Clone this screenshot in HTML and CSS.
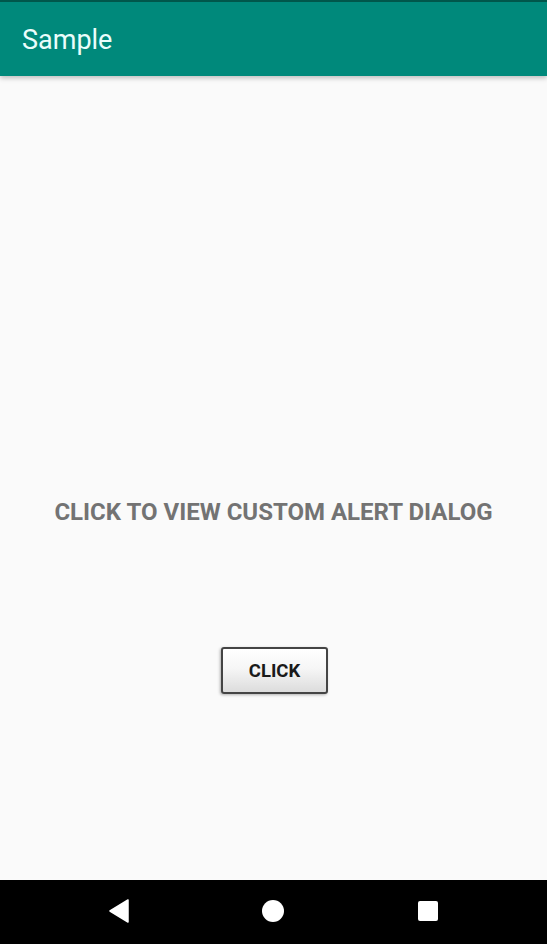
FILE: index.html
```html
<!DOCTYPE html>
<html>
<head>
<meta charset="utf-8">
<link rel="stylesheet" href="styles.css">
</head>
<body>
<div class="screen">
  <header class="appbar">
    <div class="status"></div>
    <div class="toolbar"><span class="title">Sample</span></div>
  </header>
  <main class="content">
    <div class="label">CLICK TO VIEW CUSTOM ALERT DIALOG</div>
    <button class="btn">CLICK</button>
  </main>
  <nav class="navbar">
    <svg class="nav-icon" width="20" height="24" viewBox="0 0 20 24"><path d="M19 1 L19 23 L1 12 Z" fill="#fff" stroke="#fff" stroke-width="1.5" stroke-linejoin="round"/></svg>
    <svg class="nav-icon" width="24" height="24" viewBox="0 0 24 24"><circle cx="12" cy="12" r="11" fill="#fff"/></svg>
    <svg class="nav-icon" width="22" height="22" viewBox="0 0 22 22"><rect x="1" y="1" width="20" height="20" rx="2" fill="#fff"/></svg>
  </nav>
</div>
</body>
</html>
```
FILE: styles.css
```css
* { box-sizing: border-box; }
html, body { margin: 0; padding: 0; }
body { font-family: Roboto, "Liberation Sans", sans-serif; background: #fafafa; }
.screen { width: 547px; height: 944px; display: flex; flex-direction: column; }
.appbar { height: 76px; background: #00897b; box-shadow: 0 2px 5px rgba(0,0,0,0.25); position: relative; z-index: 1; display: flex; flex-direction: column; }
.status { height: 2px; background: #00574b; }
.toolbar { flex: 1; display: flex; align-items: center; padding-left: 22px; padding-top: 2px; }
.title { color: #eafdfb; font-size: 27px; font-weight: 400; }
.content { flex: 1; display: flex; flex-direction: column; align-items: center; padding-top: 422px; }
.label { color: #737373; font-weight: 700; font-size: 24px; letter-spacing: 0; }
.btn { margin-top: 121px; margin-left: 2px; width: 107px; height: 47px; border: 2px solid #444; border-radius: 3px; background: linear-gradient(#ffffff 0%, #f6f6f6 45%, #dcdcdc 100%); box-shadow: -1px 1px 3px rgba(0,0,0,0.3); font-family: Roboto, "Liberation Sans", sans-serif; font-weight: 700; font-size: 18.5px; color: #1a1a1a; padding: 0; }
.navbar { height: 64px; background: #000; display: flex; align-items: center; justify-content: space-between; padding: 0 108px 2px 109px; }
```
